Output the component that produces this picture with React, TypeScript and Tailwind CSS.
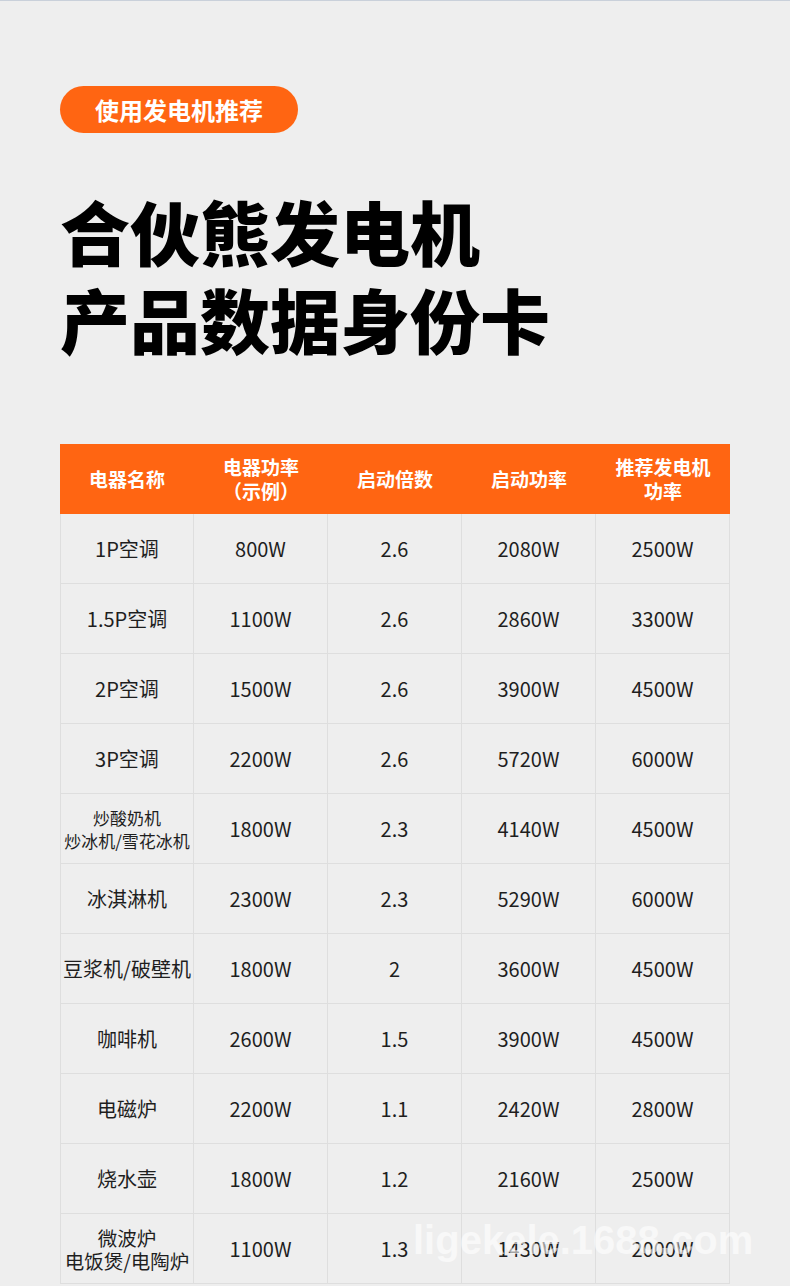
const rows: [string[], string, string, string, string][] = [
  [['1P空调'], '800W', '2.6', '2080W', '2500W'],
  [['1.5P空调'], '1100W', '2.6', '2860W', '3300W'],
  [['2P空调'], '1500W', '2.6', '3900W', '4500W'],
  [['3P空调'], '2200W', '2.6', '5720W', '6000W'],
  [['炒酸奶机', '炒冰机/雪花冰机'], '1800W', '2.3', '4140W', '4500W'],
  [['冰淇淋机'], '2300W', '2.3', '5290W', '6000W'],
  [['豆浆机/破壁机'], '1800W', '2', '3600W', '4500W'],
  [['咖啡机'], '2600W', '1.5', '3900W', '4500W'],
  [['电磁炉'], '2200W', '1.1', '2420W', '2800W'],
  [['烧水壶'], '1800W', '1.2', '2160W', '2500W'],
  [['微波炉', '电饭煲/电陶炉'], '1100W', '1.3', '1430W', '2000W'],
]

const headers = [['电器名称'], ['电器功率', '（示例）'], ['启动倍数'], ['启动功率'], ['推荐发电机', '功率']]

const font = "font-['Noto_Sans_CJK_SC','Noto_Sans',sans-serif]"

function nameSize(name: string[]) {
  if (name.length === 1) return 'text-[20px]'
  // the long two-line label is squeezed smaller than the short one
  return name[1].length > 7 ? 'text-[17px] leading-[23px]' : 'text-[19.5px] leading-[23px]'
}

export default function App() {
  return (
    <div className={`relative h-[1286px] w-full overflow-hidden bg-[#eeeeee] ${font}`}>
      <div className="h-px w-full bg-[#c9d0da]" />

      <div className="pl-[60px] pt-[85px]">
        <div className="inline-flex h-[47px] items-center rounded-full bg-[#ff6512] px-[35px] text-[24px] font-bold text-white">
          使用发电机推荐
        </div>

        <h1 className="mt-[54px] text-[70px] font-black leading-[88px] text-black">
          合伙熊发电机
          <br />
          产品数据身份卡
        </h1>

        <div className="mt-[81px] w-[670px]">
          <div className="grid h-[70px] grid-cols-5 bg-[#ff6512] text-white">
            {headers.map((h, i) => (
              <div key={i} className="flex flex-col items-center justify-center text-[19px] font-bold leading-[24px]">
                {h.map((line) => (
                  <span key={line}>{line}</span>
                ))}
              </div>
            ))}
          </div>

          {rows.map(([name, power, ratio, start, rec], i) => (
            <div key={i} className="grid h-[70px] grid-cols-5 text-[#1e1e1e]">
              <div className="flex flex-col items-center justify-center border-x border-b border-[#dedede]">
                {name.map((line) => (
                  <span key={line} className={nameSize(name)}>
                    {line}
                  </span>
                ))}
              </div>
              {[power, ratio, start, rec].map((v, j) => (
                <div key={j} className="flex items-center justify-center border-r border-b border-[#dedede] text-[20px]">
                  {v}
                </div>
              ))}
            </div>
          ))}
        </div>
      </div>

      <div className="absolute left-[413px] top-[1210px] font-['Liberation_Sans',sans-serif] text-[40px] font-bold text-white/60">
        ligekele.1688.com
      </div>
    </div>
  )
}
